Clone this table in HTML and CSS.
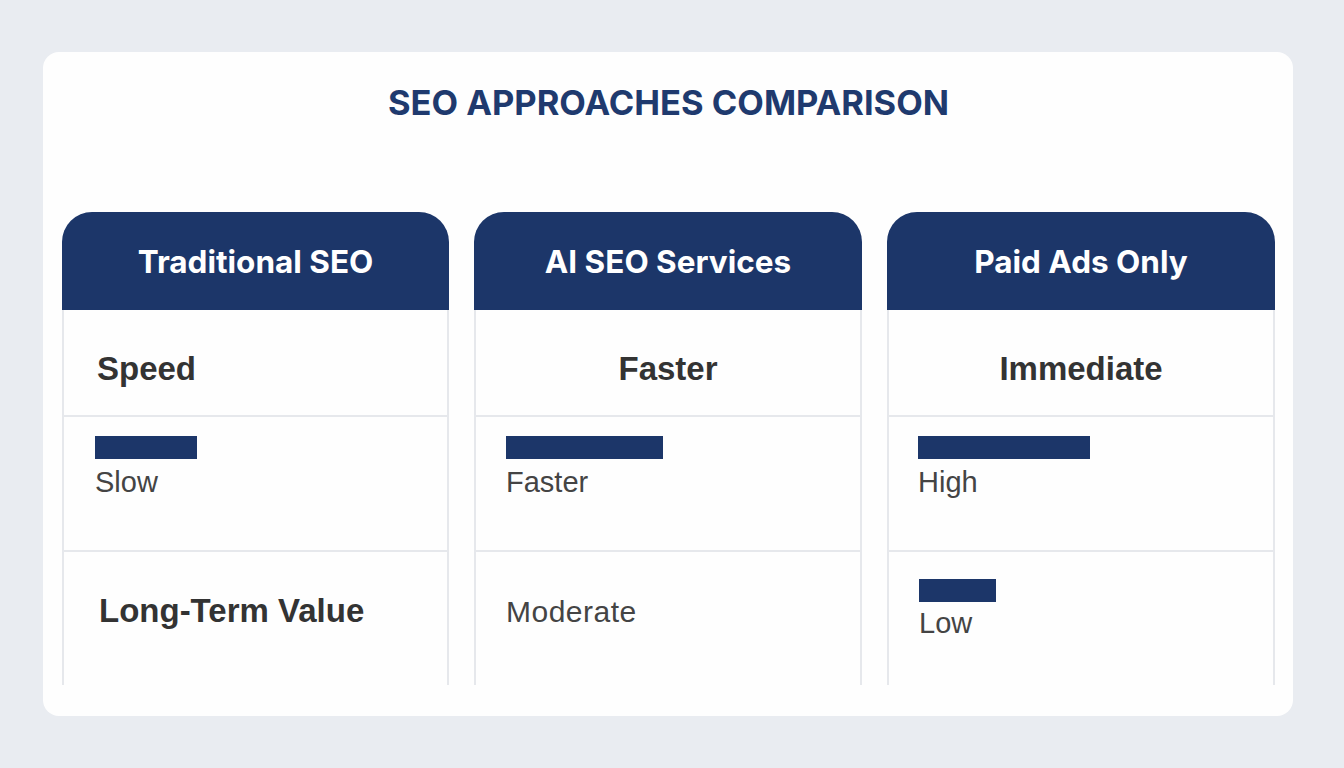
FILE: index.html
```html
<!DOCTYPE html>
<html>
<head>
<meta charset="utf-8">
<link rel="stylesheet" href="styles.css">
</head>
<body>
<div class="card">
  <h1 class="title">SEO APPROACHES COMPARISON</h1>
  <div class="grid">
    <div class="col">
      <div class="head">Traditional SEO</div>
      <div class="row r1 left"><span class="strong">Speed</span></div>
      <div class="row r2"><div class="bar" style="width:102px"></div><span class="val">Slow</span></div>
      <div class="row r3 left"><span class="strong">Long-Term Value</span></div>
    </div>
    <div class="col">
      <div class="head">AI SEO Services</div>
      <div class="row r1 center"><span class="strong">Faster</span></div>
      <div class="row r2"><div class="bar" style="width:157px"></div><span class="val">Faster</span></div>
      <div class="row r3 plain"><span class="val">Moderate</span></div>
    </div>
    <div class="col">
      <div class="head">Paid Ads Only</div>
      <div class="row r1 center"><span class="strong">Immediate</span></div>
      <div class="row r2"><div class="bar" style="width:172px"></div><span class="val">High</span></div>
      <div class="row r3 barrow"><div class="bar" style="width:77px"></div><span class="val">Low</span></div>
    </div>
  </div>
</div>
</body>
</html>
```
FILE: styles.css
```css
* { box-sizing: border-box; }
html, body { margin: 0; padding: 0; }
body {
  background: #e9ecf1;
  width: 1344px;
  height: 768px;
  padding: 52px 51px 0 43px;
  font-family: "Liberation Sans", Arial, sans-serif;
}
.card {
  background: #fefefe;
  border-radius: 16px;
  height: 664px;
  padding: 31px 18px 0 19px;
}
.title {
  margin: 0;
  text-align: center;
  font-family: Inter, "Liberation Sans", sans-serif;
  font-weight: 700;
  font-size: 34.5px;
  line-height: 40px;
  color: #1f3a6e;
}
.grid {
  margin-top: 89px;
  display: grid;
  grid-template-columns: 387px 388px 388px;
  column-gap: 25px;
}
.col { display: flex; flex-direction: column; }
.head {
  height: 98px;
  background: #1c3669;
  border-radius: 30px 30px 0 0;
  color: #fff;
  font-family: Inter, "Liberation Sans", sans-serif;
  font-weight: 700;
  font-size: 31.5px;
  display: flex;
  align-items: center;
  justify-content: center;
}
.row {
  border-left: 2px solid #e6e8ec;
  border-right: 2px solid #e6e8ec;
  display: flex;
  flex-direction: column;
}
.r1 { height: 107px; border-bottom: 2px solid #e6e8ec; justify-content: center; padding-top: 13px; }
.r2 { height: 135px; border-bottom: 2px solid #e6e8ec; padding: 19px 0 0 31px; }
.col + .col .r2 { padding-left: 30px; }
.col + .col + .col .r2 { padding-left: 29px; }
.r3 { height: 133px; }
.r1.left { padding-left: 33px; }
.r1.center { align-items: center; }
.r3.left { justify-content: flex-start; padding: 40px 0 0 35px; }
.r3.plain { padding: 43px 0 0 30px; }
.r3.barrow { padding: 27px 0 0 30px; }
.strong {
  font-weight: 700;
  font-size: 33px;
  color: #333;
  line-height: 38px;
}
.val {
  font-size: 29px;
  color: #444;
  line-height: 34px;
  margin-top: 6px;
}
.r3.plain .val { margin-top: 0; font-size: 30px; letter-spacing: 0.5px; }
.r3.barrow .val { margin-top: 4px; }
.bar {
  height: 23px;
  background: #1c3669;
}
```
